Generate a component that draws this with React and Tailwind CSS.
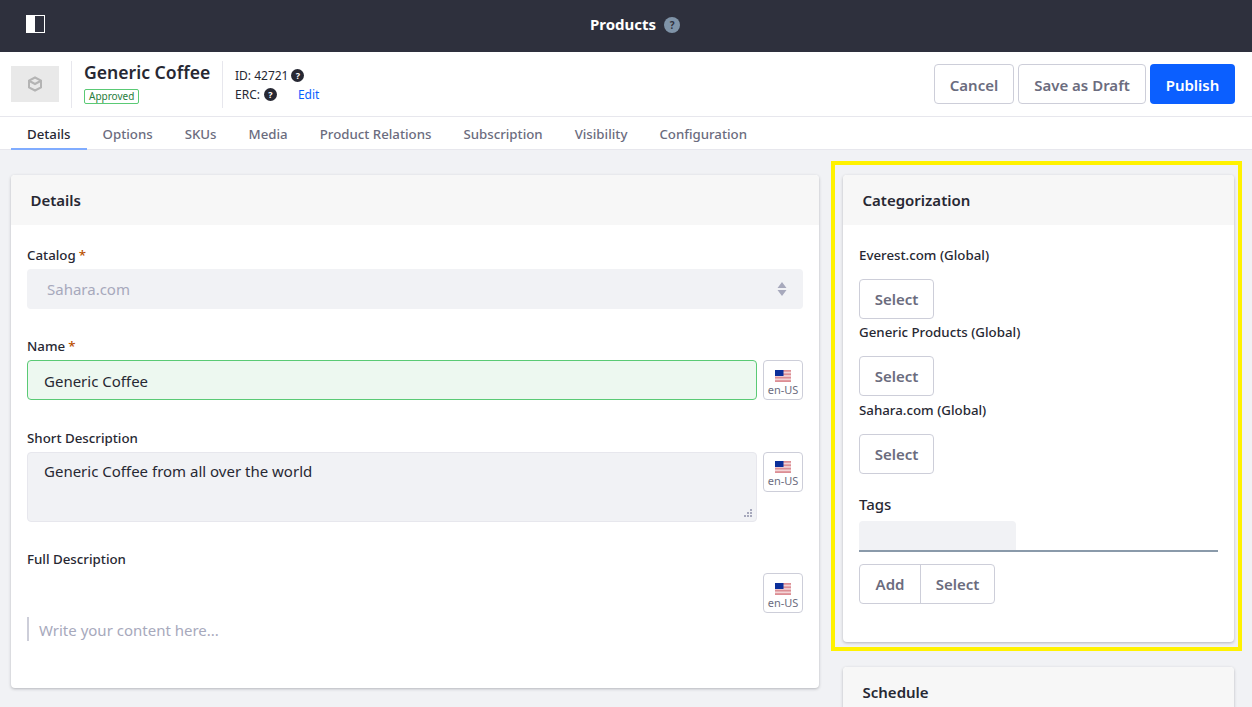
const font = { fontFamily: '"Noto Sans", sans-serif' };

function Help({ className = "" }) {
  return (
    <span className={`inline-flex h-[13px] w-[13px] shrink-0 items-center justify-center rounded-full bg-[#272833] text-[9px] font-bold leading-none text-white ${className}`}>?</span>
  );
}

function Flag() {
  return (
    <svg width="16" height="12" viewBox="0 0 16 12" className="block">
      <rect width="16" height="12" fill="#f3d4d6" />
      <rect y="0" width="16" height="1.7" fill="#dc8e94" />
      <rect y="3.4" width="16" height="1.7" fill="#dc8e94" />
      <rect y="6.8" width="16" height="1.7" fill="#dc8e94" />
      <rect y="10.2" width="16" height="1.8" fill="#dc8e94" />
      <rect width="8.5" height="6" fill="#0b2f9a" />
    </svg>
  );
}

function Locale({ tight }) {
  return (
    <div className={`flex h-10 w-10 shrink-0 flex-col items-center rounded-[4px] border border-[#cdced9] bg-white ${tight ? "pt-[8px]" : "pt-[9px]"}`}>
      <Flag />
      <span className="mt-[2px] text-[11px] leading-[12px] text-[#6b6c7e]">en-US</span>
    </div>
  );
}

function Label({ children, required, className = "" }) {
  return (
    <div className={`text-[13.3px] font-medium leading-[18px] text-[#272833] ${className}`}>
      {children}
      {required && <span className="ml-[3px] text-[#b95000]">*</span>}
    </div>
  );
}

function SelectBtn() {
  return (
    <button className="flex h-10 w-[75px] items-center justify-center rounded-[4px] border border-[#cdced9] bg-white pt-[1px] text-[15px] font-semibold text-[#6b6c7e]">
      Select
    </button>
  );
}

function CardHead({ children }) {
  return (
    <div className="flex h-[50px] items-center bg-[#f7f7f7] pl-[19.5px] pr-5 text-[15px] font-semibold text-[#272833]">{children}</div>
  );
}

const tabs = ["Details", "Options", "SKUs", "Media", "Product Relations", "Subscription", "Visibility", "Configuration"];

export default function App() {
  return (
    <div style={font} className="relative h-[707px] w-[1252px] overflow-hidden bg-[#f1f2f5]">
      <header className="relative flex h-[52px] items-center justify-center bg-[#2e303d] pb-[2px] pl-[18px]">
        <svg width="20" height="20" viewBox="0 0 20 20" className="absolute left-[26px] top-[15px]">
          <rect x="0.5" y="0.5" width="18" height="17" fill="none" stroke="#fff" />
          <rect x="0" y="0" width="9" height="18" fill="#fff" />
        </svg>
        <span className="-mt-[2px] text-[15px] font-bold text-white">Products</span>
        <span className="ml-[8px] flex h-4 w-4 items-center justify-center rounded-full bg-[#7f93a8] text-[10px] font-bold text-[#2e303d]">?</span>
      </header>

      <div className="flex h-[65px] items-center border-b border-[#e7e7ed] bg-white pl-[11px] pr-[17px]">
        <div className="flex h-9 w-12 items-center justify-center bg-[#e9e9e9]">
          <svg width="16" height="16" viewBox="0 0 16 16" fill="none" stroke="#b4b4b4" strokeWidth="2">
            <path d="M8 1.5 14 4.7v6.6L8 14.5 2 11.3V4.7Z" />
            <path d="M2.5 5 8 8l5.5-3" />
          </svg>
        </div>
        <div className="ml-3 h-[47px] w-px bg-[#e7e7ed]" />
        <div className="ml-3 flex w-[138px] flex-col items-start">
          <div className="-mt-[5px] text-[17.6px] font-semibold leading-6 text-[#272833]">Generic Coffee</div>
          <div className="mt-[5px] rounded-[2px] border border-[#5aca75] px-1 text-[10px] leading-[13px] text-[#287d3c]">Approved</div>
        </div>
        <div className="h-[47px] w-px bg-[#e7e7ed]" />
        <div className="ml-3 pt-[2px] text-[12px] leading-[19px] text-[#272833]">
          <div className="flex items-center gap-[3px]">ID: 42721 <Help /></div>
          <div className="flex items-center gap-[4px]">ERC: <Help /> <span className="ml-[17px] text-[#0b5fff]">Edit</span></div>
        </div>
        <div className="ml-auto flex gap-1">
          <button className="h-10 w-20 rounded-[4px] border border-[#cdced9] bg-white pt-[2px] text-[15px] font-semibold text-[#6b6c7e]">Cancel</button>
          <button className="h-10 w-[128px] rounded-[4px] border border-[#cdced9] bg-white pt-[2px] text-[15px] font-semibold text-[#6b6c7e]">Save as Draft</button>
          <button className="h-10 w-[85px] rounded-[4px] bg-[#0b5fff] pt-[2px] text-[15px] font-semibold text-white">Publish</button>
        </div>
      </div>

      <nav className="flex h-[33px] items-stretch border-b border-[#e7e7ed] bg-white pl-[11px]">
        {tabs.map((t, i) => (
          <div key={t} className={`-mb-px flex items-center border-b-2 px-[16px] pt-[4px] text-[13.25px] font-medium ${i === 0 ? "border-[#80acff] text-[#272833]" : "border-transparent text-[#6b6c7e]"}`}>
            {t}
          </div>
        ))}
      </nav>

      <main className="flex items-start gap-6 pl-[11px] pt-[25px]">
        <section className="h-[513px] w-[808px] overflow-hidden rounded-[4px] bg-white shadow-[0_1px_3px_rgba(39,40,51,0.3)]">
          <CardHead>Details</CardHead>
          <div className="px-4 pt-[21px]">
            <Label required>Catalog</Label>
            <div className="mt-[5px] flex h-10 items-center justify-between rounded-[4px] bg-[#f1f2f5] pl-5 pr-4 pt-[1px] text-[15px] text-[#a7a9bc]">
              Sahara.com
              <svg width="10" height="16" viewBox="0 0 10 16" fill="#a7a9bc" className="-mt-[1px]">
                <path d="M5 1 9.5 7h-9ZM5 15 .5 9h9Z" />
              </svg>
            </div>
            <Label required className="mt-[28px]">Name</Label>
            <div className="mt-[5px] flex gap-[6px]">
              <div className="flex h-10 flex-1 items-center rounded-[4px] border border-[#5aca75] bg-[#edf8f0] px-4 pt-[3px] text-[15px] text-[#272833]">Generic Coffee</div>
              <Locale />
            </div>
            <Label className="mt-[29px]">Short Description</Label>
            <div className="mt-[5px] flex items-start gap-[6px]">
              <div className="relative h-[70px] flex-1 rounded-[4px] border border-[#e7e7ed] bg-[#f1f2f5] px-4 pt-[7px] text-[15px] text-[#272833]">
                Generic Coffee from all over the world
                <svg width="9" height="9" viewBox="0 0 9 9" fill="#a7a9bc" className="absolute bottom-[3px] right-[3px]">
                  <rect x="6" y="0" width="2" height="2" /><rect x="3" y="3" width="2" height="2" /><rect x="6" y="3" width="2" height="2" />
                  <rect x="0" y="6" width="2" height="2" /><rect x="3" y="6" width="2" height="2" /><rect x="6" y="6" width="2" height="2" />
                </svg>
              </div>
              <Locale tight />
            </div>
            <Label className="mt-[28px]">Full Description</Label>
            <div className="mt-[5px] flex justify-end">
              <Locale />
            </div>
            <div className="mt-[4px] flex h-[24px] items-center border-l-2 border-[#cdced9] pl-[10px] pt-[3px] text-[15px] text-[#a7a9bc]">Write your content here...</div>
          </div>
        </section>

        <div className="flex w-[391px] flex-col gap-[25px]">
          <section className="h-[467px] overflow-hidden rounded-[4px] bg-white shadow-[0_1px_3px_rgba(39,40,51,0.3)]">
            <CardHead>Categorization</CardHead>
            <div className="px-4 pt-[21px]">
              <Label>Everest.com (Global)</Label>
              <div className="mt-[15px]"><SelectBtn /></div>
              <Label className="mt-[4px]">Generic Products (Global)</Label>
              <div className="mt-[15px]"><SelectBtn /></div>
              <Label className="mt-[5px]">Sahara.com (Global)</Label>
              <div className="mt-[15px]"><SelectBtn /></div>
              <div className="mt-[20px] text-[15px] font-medium leading-5 text-[#272833]">Tags</div>
              <div className="mt-[7px] border-b-2 border-[#8a9aaa]">
                <div className="h-[29px] w-[157px] rounded-t-[4px] bg-[#f1f2f5]" />
              </div>
              <div className="mt-[12px] flex h-10 w-[136px] rounded-[4px] border border-[#cdced9] text-[15px] font-semibold text-[#6b6c7e]">
                <div className="flex w-[61px] items-center justify-center border-r border-[#cdced9]">Add</div>
                <div className="flex flex-1 items-center justify-center">Select</div>
              </div>
            </div>
          </section>
          <section className="h-[100px] overflow-hidden rounded-[4px] bg-white shadow-[0_1px_3px_rgba(39,40,51,0.3)]">
            <CardHead>Schedule</CardHead>
          </section>
        </div>
      </main>

      <div className="pointer-events-none absolute left-[831px] top-[161px] h-[490px] w-[411px] border-4 border-[#fff200]" />
    </div>
  );
}
